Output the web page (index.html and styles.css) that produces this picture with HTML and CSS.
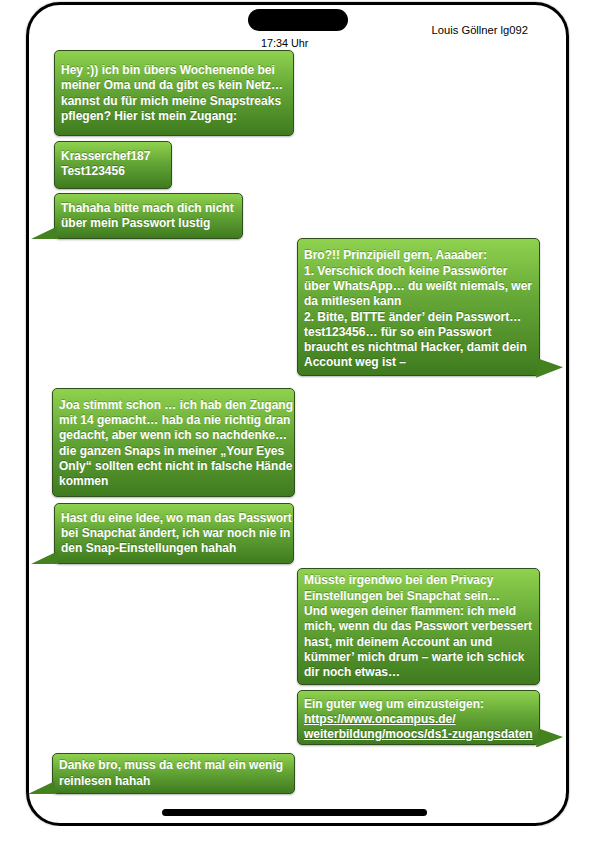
FILE: index.html
```html
<!DOCTYPE html>
<html lang="de">
<head>
    <meta charset="UTF-8">
    <title>Chat</title>
    <link rel="stylesheet" href="styles.css">
</head>
<body>
<div class="phone">
    <div class="top">
        <div class="notch"></div>
        <div class="owner">Louis Göllner lg092</div>
    </div>
    <div class="time">17:34 Uhr</div>

    <div class="chat">
        <div class="msg in first p-1">Hey :)) ich bin übers Wochenende bei<br>meiner Oma und da gibt es kein Netz…<br>kannst du für mich meine Snapstreaks<br>pflegen? Hier ist mein Zugang:</div>
        <div class="msg in w-s p-2">Krasserchef187<br>Test123456</div>
        <div class="msg in w-m tail p-3">Thahaha bitte mach dich nicht<br>über mein Passwort lustig</div>
        <div class="msg out tail up p-4">Bro?!! Prinzipiell gern, Aaaaber:<br>1. Verschick doch keine Passwörter<br>über WhatsApp… du weißt niemals, wer<br>da mitlesen kann<br>2. Bitte, BITTE änder’ dein Passwort…<br>test123456… für so ein Passwort<br>braucht es nichtmal Hacker, damit dein<br>Account weg ist –</div>
        <div class="msg in wide far p-5">Joa stimmt schon … ich hab den Zugang<br>mit 14 gemacht… hab da nie richtig dran<br>gedacht, aber wenn ich so nachdenke…<br>die ganzen Snaps in meiner „Your Eyes<br>Only“ sollten echt nicht in falsche Hände<br>kommen</div>
        <div class="msg in tail mid p-6">Hast du eine Idee, wo man das Passwort<br>bei Snapchat ändert, ich war noch nie in<br>den Snap-Einstellungen hahah</div>
        <div class="msg out p-7">Müsste irgendwo bei den Privacy<br>Einstellungen bei Snapchat sein…<br>Und wegen deiner flammen: ich meld<br>mich, wenn du das Passwort verbessert<br>hast, mit deinem Account an und<br>kümmer’ mich drum – warte ich schick<br>dir noch etwas…</div>
        <div class="msg out tail p-8">Ein guter weg um einzusteigen:<br><a href="#">https://www.oncampus.de/<br>weiterbildung/moocs/ds1-zugangsdaten</a></div>
        <div class="msg in wide tail p-9">Danke bro, muss da echt mal ein wenig<br>reinlesen hahah</div>
    </div>

    <div class="home-bar"></div>
</div>
</body>
</html>
```

FILE: styles.css
```css
* {
    margin: 0;
    padding: 0;
    box-sizing: border-box;
}

body {
    background: #fff;
    font-family: "Liberation Sans", Arial, sans-serif;
    color: #000;
}

.phone {
    width: 543px;
    height: 824px;
    margin: 2px 0 0 26px;
    border: 3px solid #000;
    border-radius: 34px;
    display: flex;
    flex-direction: column;
    box-shadow: 0 0 2px rgba(0, 0, 0, .4);
}

/* oben: notch + name */
.top {
    display: grid;
    grid-template-columns: 1fr auto 1fr;
    padding-top: 4px;
}

.notch {
    grid-column: 2;
    width: 100px;
    height: 22px;
    background: #000;
    border-radius: 11px;
}

.owner {
    grid-column: 3;
    justify-self: end;
    align-self: end;
    font-size: 11.2px;
    margin-right: 38px;
    margin-bottom: -5px;
}

.time {
    font-size: 10.8px;
    margin: 6px 0 0 232px;
}

.chat {
    flex: 1;
    display: flex;
    flex-direction: column;
    padding: 1px 26px 0 25px;
}

.msg {
    position: relative;
    width: 240px;
    margin-top: 4px;
    padding: 8px 6px;
    font-size: 12px;
    line-height: 15.3px;
    font-weight: bold;
    color: #fff;
    text-shadow: 0 -1px 0 rgba(0, 0, 0, .25);
    background: linear-gradient(#8fd24e, #64a636 45%, #3f7b1f);
    border: 1px solid #2f4f1b;
    border-radius: 5px;
    box-shadow: 0 1px 2px rgba(0, 0, 0, .3);
    white-space: nowrap;
}

.msg a {
    color: #fff;
}

.in {
    align-self: flex-start;
}

.out {
    align-self: flex-end;
    width: 243px;
}

.wide {
    width: 243px;
    margin-left: -2px;
}

.w-s { width: 118px; }
.w-m { width: 189px; }

/* abstaende */
.first { margin-top: 0; }
.up { margin-top: -1px; }
.far { margin-top: 12px; }
.mid { margin-top: 6px; }
.p-2 { margin-top: 5px; }
.p-8 { margin-top: 5px; }
.p-9 { margin-top: 8px; }

/* padding je nachricht */
.p-1 { padding-top: 12px; padding-bottom: 11px; }
.p-2 { padding-top: 7px; padding-bottom: 8px; }
.p-3 { padding-top: 7px; padding-bottom: 7px; }
.p-4 { padding-top: 9px; padding-bottom: 4px; }
.p-5 { padding-top: 9px; padding-bottom: 6px; }
.p-6 { padding-top: 7px; padding-bottom: 7px; }
.p-7 { padding-top: 4px; padding-bottom: 3px; }
.p-8 { padding-top: 6px; padding-bottom: 2px; }
.p-9 { padding-top: 4px; padding-bottom: 4px; }

/* sprechblasen-spitze */
.tail::after {
    content: "";
    position: absolute;
    background: #44821f;
}

.in.tail::after {
    left: -25px;
    bottom: -1px;
    width: 27px;
    height: 13px;
    clip-path: polygon(0 100%, 100% 0, 100% 100%);
}

.out.tail::after {
    right: -24px;
    bottom: -3px;
    width: 27px;
    height: 19px;
    clip-path: polygon(10% 0, 100% 45%, 0 100%);
}

.home-bar {
    width: 265px;
    height: 7px;
    margin: 0 0 7px 133px;
    background: #000;
    border-radius: 4px;
}
```
